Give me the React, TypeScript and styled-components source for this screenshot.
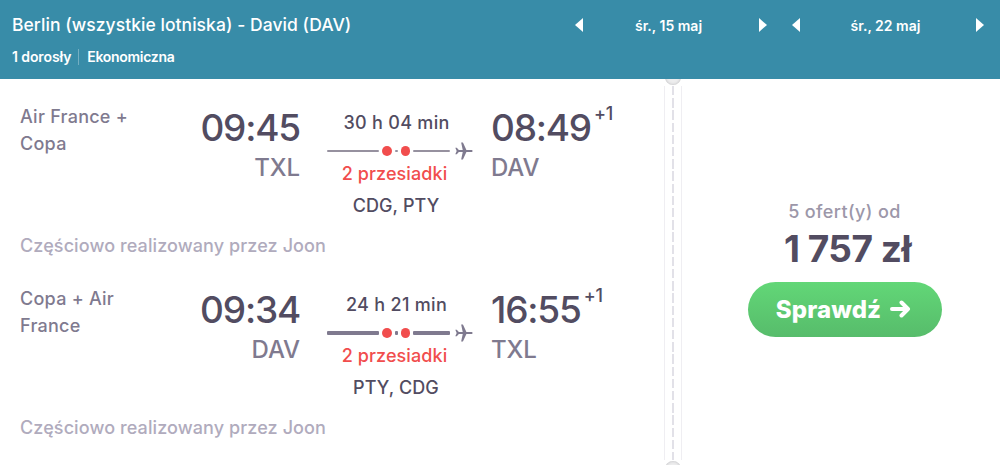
import React, { FC } from 'react'
import styled, { createGlobalStyle } from 'styled-components'

const GlobalStyle = createGlobalStyle`
  * {
    box-sizing: border-box;
  }

  body {
    margin: 0;
    background-color: #fff;
    color: #524c61;
    font-family: Inter, 'Liberation Sans', sans-serif;
    font-weight: 450;
    overflow: hidden;
  }
`

const StylePage = styled.div`
  display: flex;
  flex-direction: column;
  width: 1000px;
  height: 465px;
  overflow: hidden;
`

const StyleHeader = styled.header`
  display: flex;
  justify-content: space-between;
  flex: none;
  height: 79px;
  padding: 12px 16px 0 12px;
  background-color: #388ca8;
  color: #fff;
`

const StyleTitle = styled.h1`
  margin: 0;
  font-weight: 500;
  font-size: 17.5px;
  line-height: 26px;
  letter-spacing: 0.05px;
  white-space: nowrap;
`

const StyleDetails = styled.div`
  display: flex;
  align-items: center;
  margin-top: 9px;
  font-weight: 600;
  font-size: 14px;
  line-height: 20px;
`

const StyleDetail = styled.span<{ $spacing: number }>`
  letter-spacing: ${({ $spacing }) => $spacing}px;

  & + & {
    margin-left: 7px;
    padding-left: 8px;
    border-left: 1px solid #73aec2;
    line-height: 16px;
  }
`

const StyleDates = styled.div`
  display: flex;
  gap: 25px;
  height: 26px;
`

const StyleDate = styled.div`
  display: flex;
  justify-content: space-between;
  align-items: center;
  width: 192px;
  font-weight: 600;
  font-size: 14px;
  letter-spacing: 0;
`

const StyleDateText = styled.span`
  margin-right: 5px;
`

const StyleArrow = styled.span<{ $back?: boolean }>`
  width: 8px;
  height: 14px;
  background-color: #fff;
  clip-path: ${({ $back }) =>
    $back ? 'polygon(100% 0, 100% 100%, 0 50%)' : 'polygon(0 0, 100% 50%, 0 100%)'};
`

const StyleTicket = styled.main`
  display: flex;
  height: 386px;
  overflow: hidden;
`

const StyleLegs = styled.section`
  flex: none;
  width: 664px;
  padding-top: 24px;
`

const StyleLeg = styled.article`
  display: grid;
  grid-template-columns: 140px 139px 191px 150px;
  grid-template-rows: 126px 56px;
  padding-left: 21px;
`

const StyleAirline = styled.div`
  width: 125px;
  margin-left: -1px;
  color: #7f7a8f;
  font-size: 18px;
  line-height: 27px;
  letter-spacing: 0.25px;
`

const StyleStation = styled.div<{ $end?: boolean }>`
  padding-top: 2px;
  text-align: ${({ $end }) => ($end ? 'right' : 'left')};
`

const StyleTime = styled.div`
  font-size: 37px;
  line-height: 45px;
  letter-spacing: -1.2px;
  white-space: nowrap;
`

const StyleNextDay = styled.sup`
  margin-left: 3px;
  font-size: 18px;
  line-height: 0;
  letter-spacing: -0.2px;
  vertical-align: 21px;
`

const StyleCode = styled.div`
  color: #7f7a8f;
  font-size: 24px;
  line-height: 36px;
  letter-spacing: -0.1px;
`

const StyleRoute = styled.div`
  display: flex;
  flex-direction: column;
  align-items: center;
  padding: 6px 18px 0 27px;
  font-size: 18px;
  line-height: 28px;
`

const StyleDuration = styled.div`
  margin-right: 7px;
  letter-spacing: 0.3px;
`

const StyleTrack = styled.div`
  display: flex;
  align-items: center;
  width: 146px;
  height: 27px;
`

const StyleLine = styled.span<{ $width: number; $bold?: boolean }>`
  width: ${({ $width }) => $width}px;
  height: ${({ $bold }) => ($bold ? 4 : 2)}px;
  border-radius: 1px;
  background-color: ${({ $bold }) => ($bold ? '#7f7a8f' : '#96919f')};
`

const StyleStop = styled.span`
  width: 10px;
  height: 10px;
  margin: 0 3px;
  border-radius: 50%;
  background-color: #f14d4d;
`

const StylePlane = styled.svg`
  width: 18px;
  height: 18px;
  margin-left: 5px;
  fill: #7f7a8f;
`

const StyleStops = styled.div`
  margin: -4px 11px 0 0;
  color: #f14d4d;
  font-weight: 500;
  letter-spacing: 0.1px;
`

const StyleAirports = styled.div`
  margin: 4px 8px 0 0;
  letter-spacing: 0.1px;
`

const StyleNote = styled.div`
  grid-column: 1 / -1;
  margin-left: -1px;
  padding-top: 3px;
  color: #b0abbd;
  font-size: 18px;
  line-height: 28px;
  letter-spacing: 0.1px;
`

const StyleDivider = styled.div`
  position: relative;
  flex: none;
  width: 18px;
  padding: 7px 0 5px;
`

const StylePerforation = styled.div`
  height: 100%;
  border-right: 1px solid #efeef2;
  border-left: 1px solid #efeef2;
  background: repeating-linear-gradient(#e2e1e8 0 9.4px, transparent 9.4px 12.2px) center / 2px 100%
    no-repeat;
`

const StyleNotch = styled.span<{ $bottom?: boolean }>`
  position: absolute;
  left: 1px;
  ${({ $bottom }) => ($bottom ? 'bottom: -12px' : 'top: -10px')};
  width: 16px;
  height: 16px;
  border-radius: 50%;
  background-color: #ededee;
  box-shadow: inset 0 0 3px #b9b9bc;
`

const StyleOffer = styled.aside`
  display: flex;
  flex-direction: column;
  align-items: center;
  width: 318px;
  padding: 119px 0 0 7px;
`

const StyleOfferCount = styled.div`
  color: #9c97a9;
  font-size: 18px;
  line-height: 28px;
  letter-spacing: 0.4px;
`

const StylePrice = styled.div`
  margin: 1px 0 0 6px;
  font-weight: 700;
  font-size: 37px;
  line-height: 44px;
  letter-spacing: -0.5px;
  word-spacing: 0;
`

const StyleButton = styled.button`
  display: flex;
  justify-content: center;
  align-items: center;
  gap: 9px;
  width: 194px;
  height: 55px;
  margin-top: 11px;
  padding: 0 2px 0 0;
  border: 0;
  border-radius: 28px;
  background: linear-gradient(#62d777, #57bc6b);
  color: #fff;
  font-weight: 800;
  font-size: 24px;
  font-family: inherit;
  letter-spacing: 0.1px;
  cursor: pointer;
`

interface LegData {
  airline: string
  from: string
  to: string
  departs: string
  arrives: string
  duration: string
  airports: string
  bold?: boolean
}

const legs: LegData[] = [
  {
    airline: 'Air France + Copa',
    from: 'TXL',
    to: 'DAV',
    departs: '09:45',
    arrives: '08:49',
    duration: '30 h 04 min',
    airports: 'CDG, PTY',
  },
  {
    airline: 'Copa + Air France',
    from: 'DAV',
    to: 'TXL',
    departs: '09:34',
    arrives: '16:55',
    duration: '24 h 21 min',
    airports: 'PTY, CDG',
    bold: true,
  },
]

const DatePicker: FC<{ date: string }> = ({ date }) => (
  <StyleDate>
    <StyleArrow $back />
    <StyleDateText>{date}</StyleDateText>
    <StyleArrow />
  </StyleDate>
)

const Leg: FC<{ leg: LegData }> = ({ leg }) => (
  <StyleLeg>
    <StyleAirline>{leg.airline}</StyleAirline>
    <StyleStation $end>
      <StyleTime>{leg.departs}</StyleTime>
      <StyleCode>{leg.from}</StyleCode>
    </StyleStation>
    <StyleRoute>
      <StyleDuration>{leg.duration}</StyleDuration>
      <StyleTrack>
        <StyleLine $width={52} $bold={leg.bold} />
        <StyleStop />
        <StyleLine $width={3} $bold={leg.bold} />
        <StyleStop />
        <StyleLine $width={37} $bold={leg.bold} />
        <StylePlane viewBox="0 0 18 18">
          <path d="M18 9 17 8 11.5 7.9 8 .5H6.2L7.8 7.9 3.9 8.1 1.8 5.6H.3L1.7 9 .3 12.4H1.8L3.9 9.9 7.8 10.1 6.2 17.5H8L11.5 10.1 17 10Z" />
        </StylePlane>
      </StyleTrack>
      <StyleStops>2 przesiadki</StyleStops>
      <StyleAirports>{leg.airports}</StyleAirports>
    </StyleRoute>
    <StyleStation>
      <StyleTime>
        {leg.arrives}
        <StyleNextDay>+1</StyleNextDay>
      </StyleTime>
      <StyleCode>{leg.to}</StyleCode>
    </StyleStation>
    <StyleNote>Częściowo realizowany przez Joon</StyleNote>
  </StyleLeg>
)

const App: FC = () => {
  return (
    <StylePage>
      <GlobalStyle />
      <StyleHeader>
        <div>
          <StyleTitle>Berlin (wszystkie lotniska) - David (DAV)</StyleTitle>
          <StyleDetails>
            <StyleDetail $spacing={-0.1}>1 dorosły</StyleDetail>
            <StyleDetail $spacing={-0.3}>Ekonomiczna</StyleDetail>
          </StyleDetails>
        </div>
        <StyleDates>
          <DatePicker date="śr., 15 maj" />
          <DatePicker date="śr., 22 maj" />
        </StyleDates>
      </StyleHeader>
      <StyleTicket>
        <StyleLegs>
          {legs.map((leg) => (
            <Leg key={leg.duration} leg={leg} />
          ))}
        </StyleLegs>
        <StyleDivider>
          <StylePerforation />
          <StyleNotch />
          <StyleNotch $bottom />
        </StyleDivider>
        <StyleOffer>
          <StyleOfferCount>5 ofert(y) od</StyleOfferCount>
          <StylePrice>1 757 zł</StylePrice>
          <StyleButton>
            Sprawdź
            <svg width="21" height="20" viewBox="0 0 21 20" fill="none" stroke="#fff" strokeWidth="4">
              <path d="M2 9H18M11.5 2.5L18 9L11.5 15.5" strokeLinecap="round" strokeLinejoin="round" />
            </svg>
          </StyleButton>
        </StyleOffer>
      </StyleTicket>
    </StylePage>
  )
}

export default App
